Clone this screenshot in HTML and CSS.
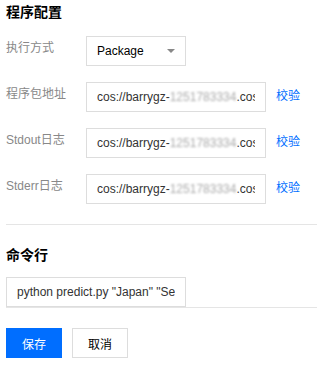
FILE: index.html
```html
<!DOCTYPE html>
<html>
<head>
    <title>程序配置</title>
    <link rel="stylesheet" href="styles.css">
</head>
<body>
    <div class="page">
        <div class="section-title">程序配置</div>

        <div class="form-row">
            <div class="form-label">执行方式</div>
            <div class="field select">
                <span>Package</span>
                <span class="caret"></span>
            </div>
        </div>

        <div class="form-row">
            <div class="form-label">程序包地址</div>
            <div class="field wide"><span class="field-text">cos://barrygz-<span class="masked">1251783334</span>.cos</span></div>
            <a class="check-link">校验</a>
        </div>

        <div class="form-row">
            <div class="form-label">Stdout日志</div>
            <div class="field wide"><span class="field-text">cos://barrygz-<span class="masked">1251783334</span>.cos</span></div>
            <a class="check-link">校验</a>
        </div>

        <div class="form-row last">
            <div class="form-label">Stderr日志</div>
            <div class="field wide"><span class="field-text">cos://barrygz-<span class="masked">1251783334</span>.cos</span></div>
            <a class="check-link">校验</a>
        </div>

        <div class="divider"></div>

        <div class="section-title cmd-title">命令行</div>
        <div class="field wide"><span class="field-text">python predict.py "Japan" "Se</span></div>

        <div class="divider"></div>

        <div class="actions">
            <button class="btn btn-primary">保存</button>
            <button class="btn">取消</button>
        </div>
    </div>
</body>
</html>
```

FILE: styles.css
```css
body {
    margin: 0;
    background-color: #fff;
    color: #000;
    font-family: "Liberation Sans", Arial, "Noto Sans CJK SC", sans-serif;
    font-size: 12px;
}

.page {
    padding-left: 6px;
}

.section-title {
    font-size: 14px;
    font-weight: bold;
    line-height: 20px;
    margin: 2px 0 14px;
}

.cmd-title {
    margin: 20px 0 12px;
}

.form-row {
    display: flex;
    align-items: flex-start;
    margin-bottom: 16px;
}

.form-row.last {
    margin-bottom: 20px;
}

.form-label {
    width: 80px;
    flex-shrink: 0;
    line-height: 18px;
    padding-top: 3px;
    color: #888;
}

.field {
    box-sizing: border-box;
    height: 30px;
    border: 1px solid #ddd;
    padding: 0 10px;
    line-height: 28px;
    color: #333;
    flex-shrink: 0;
}

.field-text {
    display: block;
    white-space: nowrap;
    overflow: hidden;
}

.wide {
    width: 180px;
}

.select {
    width: 100px;
    display: flex;
    align-items: center;
    justify-content: space-between;
    color: #000;
}

.caret {
    width: 0;
    height: 0;
    border-left: 4px solid transparent;
    border-right: 4px solid transparent;
    border-top: 4px solid #888;
}

.masked {
    color: #aaa;
    filter: blur(1.2px);
}

.check-link {
    margin-left: 10px;
    padding-top: 5px;
    line-height: 18px;
    color: #006eff;
    cursor: pointer;
}

.divider {
    height: 1px;
    background-color: #e5e5e5;
}

.actions {
    display: flex;
    gap: 10px;
    margin-top: 20px;
}

.btn {
    box-sizing: border-box;
    width: 56px;
    height: 30px;
    border: 1px solid #ddd;
    background-color: #fff;
    color: #000;
    font-family: inherit;
    font-size: 12px;
    padding: 0;
    cursor: pointer;
}

.btn-primary {
    border-color: #006eff;
    background-color: #006eff;
    color: #fff;
}
```
